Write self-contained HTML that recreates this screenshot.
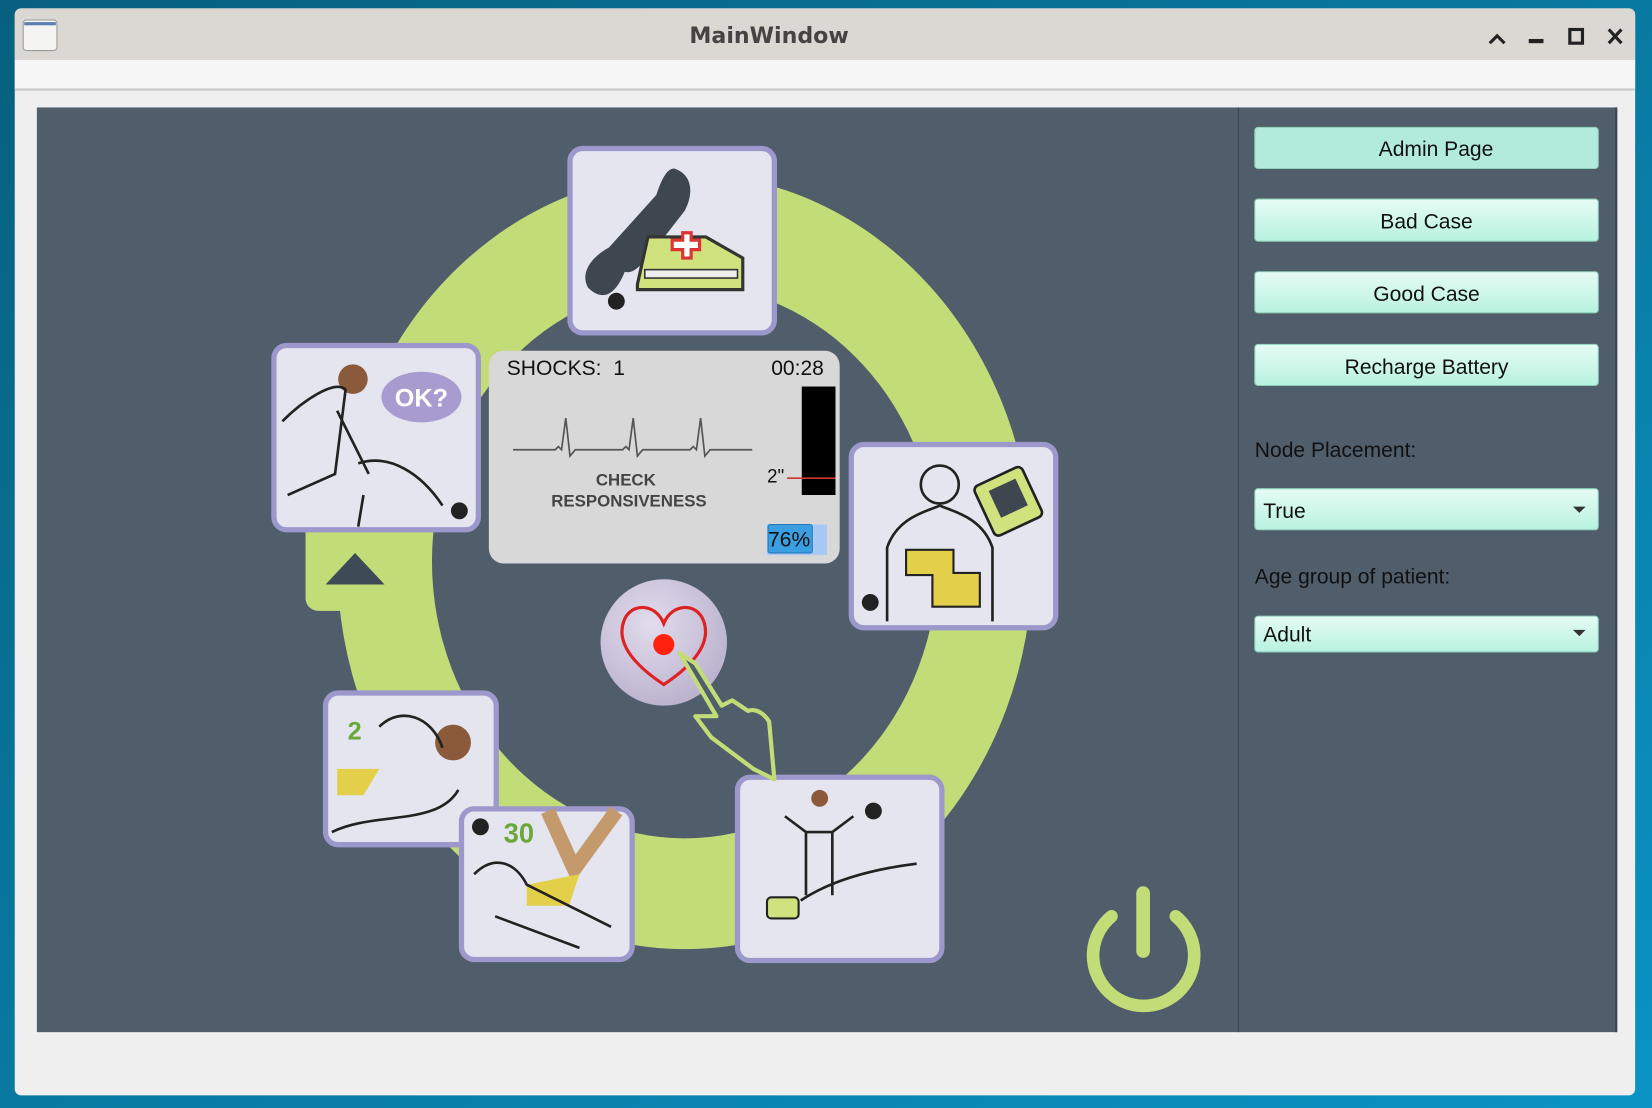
<!DOCTYPE html>
<html><head><style>
html,body{margin:0;padding:0;width:1652px;height:1108px;overflow:hidden}
svg{display:block}
text{font-family:"Liberation Sans",sans-serif}
</style></head><body>
<svg width="1652" height="1108" viewBox="0 0 1568 1052" preserveAspectRatio="none">
<defs>
<linearGradient id="bg" x1="0" y1="0" x2="1" y2="1"><stop offset="0" stop-color="#07607f"/><stop offset="1" stop-color="#0a93c4"/></linearGradient>
<linearGradient id="btn" x1="0" y1="0" x2="0" y2="1"><stop offset="0" stop-color="#e6fcf4"/><stop offset="1" stop-color="#b8f2df"/></linearGradient>
<radialGradient id="hb" cx="0.4" cy="0.35" r="0.7"><stop offset="0" stop-color="#e2dced"/><stop offset="1" stop-color="#b9b1cd"/></radialGradient>
</defs>
<rect width="1568" height="1052" fill="url(#bg)"/>
<rect x="14" y="8" width="1538" height="1032" rx="6" fill="#efefef"/>
<path d="M14 57 V14 a6 6 0 0 1 6-6 H1546 a6 6 0 0 1 6 6 V57 Z" fill="#dbd7d3"/>
<rect x="22" y="19" width="32" height="29" rx="3" fill="#f4f4f2" stroke="#9a9a9a"/>
<rect x="23" y="21" width="30" height="3" fill="#5a7fb0"/>
<text x="730" y="41" text-anchor="middle" font-size="21" font-weight="bold" fill="#444" style="font-family:'DejaVu Sans'">MainWindow</text>
<path d="M1414 41 l7-7 7 7" stroke="#222" stroke-width="3" fill="none"/>
<rect x="1451" y="37" width="14" height="4" fill="#222"/>
<rect x="1490" y="28" width="12" height="13" fill="none" stroke="#222" stroke-width="3"/>
<path d="M1527 28 l12 13 M1539 28 l-12 13" stroke="#222" stroke-width="3"/>
<rect x="14" y="57" width="1538" height="27" fill="#f6f6f6"/>
<rect x="14" y="84" width="1538" height="2" fill="#c8c8c8"/>
<rect x="35" y="102" width="1500" height="878" fill="#505d6b"/>
<rect x="1175" y="102" width="1" height="878" fill="#3c4652"/>
<rect x="1533" y="102" width="2" height="878" fill="#3c4652"/>
<path fill-rule="evenodd" fill="#c2dc78" d="M320 533 a330 368 0 1 0 660 0 a330 368 0 1 0 -660 0 Z M410 533 a240 263 0 1 0 480 0 a240 263 0 1 0 -480 0 Z"/>
<rect x="290" y="480" width="95" height="100" rx="12" fill="#c2dc78"/>
<path d="M309 555 l28-30 28 30z" fill="#3e4a55"/>
<g stroke="#9c98cb" stroke-width="5" fill="#e4e5ee">
<rect x="541" y="141" width="194" height="175" rx="12"/>
<rect x="260" y="328" width="194" height="175" rx="12"/>
<rect x="808" y="422" width="194" height="174" rx="12"/>
<rect x="700" y="738" width="194" height="174" rx="12"/>
<rect x="309" y="658" width="162" height="144" rx="12"/>
<rect x="438" y="768" width="162" height="143" rx="12"/>
</g>
<path d="M640 160 c15 5 20 20 10 40 l-35 45 c-10 10 -15 15 -22 13 c-8 20 -20 30 -35 15 c-8 -15 5 -30 20 -38 l45 -50 c5 -15 10 -25 17 -25z" fill="#3e4650"/>
<path d="M605 270 l10-45 h55 l35 20 v30 h-100z" fill="#cfe27e" stroke="#333" stroke-width="3"/>
<rect x="612" y="256" width="88" height="8" fill="#eee" stroke="#333" stroke-width="1.5"/>
<path d="M638 228 h10 v-7 h8 v7 h8 v9 h-8 v8 h-8 v-8 h-10z" fill="#fff" stroke="#d33" stroke-width="3"/>
<circle cx="585" cy="286" r="8" fill="#222"/>
<ellipse cx="400" cy="377" rx="38" ry="24" fill="#a89bcf"/>
<text x="400" y="386" text-anchor="middle" font-size="24" font-weight="bold" fill="#fff">OK?</text>
<circle cx="335" cy="360" r="14" fill="#8a5a3a"/>
<path d="M268 400 c20-20 50-40 60-30 l-10 80 l-45 20 M320 390 l30 60 M340 440 c30-10 60 10 80 40 M345 470 l-5 30" stroke="#222" stroke-width="2.5" fill="none"/>
<circle cx="436" cy="485" r="8" fill="#222"/>
<circle cx="892" cy="460" r="18" fill="none" stroke="#222" stroke-width="2.5"/>
<path d="M842 590 v-70 c10-30 40-35 50-40 c10 5 40 10 50 40 v70" stroke="#222" stroke-width="2.5" fill="none"/>
<path d="M860 522 h45 v22 h25 v32 h-45 v-30 h-25z" fill="#e4cf4a" stroke="#222" stroke-width="2"/>
<rect x="932" y="450" width="50" height="52" rx="5" transform="rotate(-25 957 476)" fill="#cfe27e" stroke="#222" stroke-width="2.5"/>
<rect x="943" y="459" width="28" height="28" transform="rotate(-25 957 473)" fill="#3e4650"/>
<circle cx="826" cy="572" r="8" fill="#222"/>
<circle cx="778" cy="758" r="8" fill="#8a5a3a"/>
<path d="M745 775 l20 15 h25 l20-15 M765 790 v60 M790 790 v60 M760 855 c30-20 70-30 110-35" stroke="#222" stroke-width="2.5" fill="none"/>
<rect x="728" y="852" width="30" height="20" rx="4" fill="#cfe27e" stroke="#222" stroke-width="2"/>
<circle cx="829" cy="770" r="8" fill="#222"/>
<text x="330" y="702" font-size="24" font-weight="bold" fill="#6aa83a">2</text>
<circle cx="430" cy="705" r="17" fill="#8a5a3a"/>
<path d="M320 730 h40 l-15 25 h-25z" fill="#e4cf4a"/>
<path d="M315 790 c40-20 100-5 120-40 M360 690 c20-20 50-10 60 20" stroke="#222" stroke-width="2.5" fill="none"/>
<text x="478" y="800" font-size="26" font-weight="bold" fill="#6aa83a">30</text>
<circle cx="456" cy="785" r="8" fill="#222"/>
<path d="M520 770 l25 55 l40-55" stroke="#c49a6c" stroke-width="14" fill="none"/>
<path d="M500 840 l50-10 l-10 30 h-40z" fill="#e4cf4a"/>
<path d="M450 830 c20-20 40-10 50 10 l80 40 M470 870 l80 30" stroke="#222" stroke-width="2.5" fill="none"/>
<rect x="464" y="333" width="333" height="202" rx="14" fill="#d8d8d8"/>
<text x="481" y="356" font-size="20" fill="#111" xml:space="preserve">SHOCKS:  1</text>
<text x="782" y="356" font-size="20" fill="#111" text-anchor="end">00:28</text>
<rect x="761" y="367" width="32" height="103" fill="#000"/>
<path d="M747 454 h46" stroke="#c33" stroke-width="1.5"/>
<text x="728" y="458" font-size="18" fill="#111">2"</text>
<path d="M487 427 h40 l3-3 l3 3 l4-30 l4 36 l5-6 h45 l3-3 l3 3 l4-30 l4 36 l5-6 h45 l3-3 l3 3 l4-30 l4 36 l5-6 h40" stroke="#555" stroke-width="1.6" fill="none"/>
<text x="594" y="461" font-size="16" fill="#444" text-anchor="middle" font-weight="bold">CHECK</text>
<text x="597" y="481" font-size="16" fill="#444" text-anchor="middle" font-weight="bold">RESPONSIVENESS</text>
<rect x="728" y="498" width="57" height="29" fill="#a8c8f5"/>
<rect x="729" y="498" width="42" height="27" rx="2" fill="#3a9ee0" stroke="#2677b8"/>
<text x="729" y="519" font-size="20" fill="#111">76%</text>
<circle cx="630" cy="610" r="60" fill="url(#hb)"/>
<path d="M630 650 c-30-20-45-40-38-60 c6-18 30-18 38 2 c8-20 32-20 38-2 c7 20-8 40-38 60z" fill="none" stroke="#d22" stroke-width="3"/>
<circle cx="630" cy="612" r="10" fill="#f21"/>
<path d="M645 620 l35 60 l-20 0 l15 20 l40 30 l20 10 l-5-55 c-10-15 -20-10-20-10 l-15-10 l-10 5 l-25-40z" fill="#505d6b" stroke="#c2dc78" stroke-width="4" stroke-linejoin="round"/>
<path d="M1055 870 a48 48 0 1 0 61 0" fill="none" stroke="#c2dc78" stroke-width="12" stroke-linecap="round"/>
<path d="M1085 848 v55" stroke="#c2dc78" stroke-width="13" stroke-linecap="round"/>
<g stroke="#8fd0bb" stroke-width="1">
<rect x="1191" y="121" width="326" height="39" rx="3" fill="#b2eadc"/>
<rect x="1191" y="189" width="326" height="40" rx="3" fill="url(#btn)"/>
<rect x="1191" y="258" width="326" height="39" rx="3" fill="url(#btn)"/>
<rect x="1191" y="327" width="326" height="39" rx="3" fill="url(#btn)"/>
<rect x="1191" y="464" width="326" height="39" rx="3" fill="url(#btn)"/>
<rect x="1191" y="585" width="326" height="34" rx="3" fill="url(#btn)"/>
</g>
<g font-size="20" fill="#111" text-anchor="middle">
<text x="1363" y="148">Admin Page</text>
<text x="1354" y="217">Bad Case</text>
<text x="1354" y="286">Good Case</text>
<text x="1354" y="355">Recharge Battery</text>
</g>
<text x="1191" y="434" font-size="20" fill="#111">Node Placement:</text>
<text x="1199" y="492" font-size="20" fill="#111">True</text>
<path d="M1493 481 h12 l-6 6z" fill="#333"/>
<text x="1191" y="554" font-size="20" fill="#111">Age group of patient:</text>
<text x="1199" y="609" font-size="20" fill="#111">Adult</text>
<path d="M1493 598 h12 l-6 6z" fill="#333"/>
</svg>
</body></html>
